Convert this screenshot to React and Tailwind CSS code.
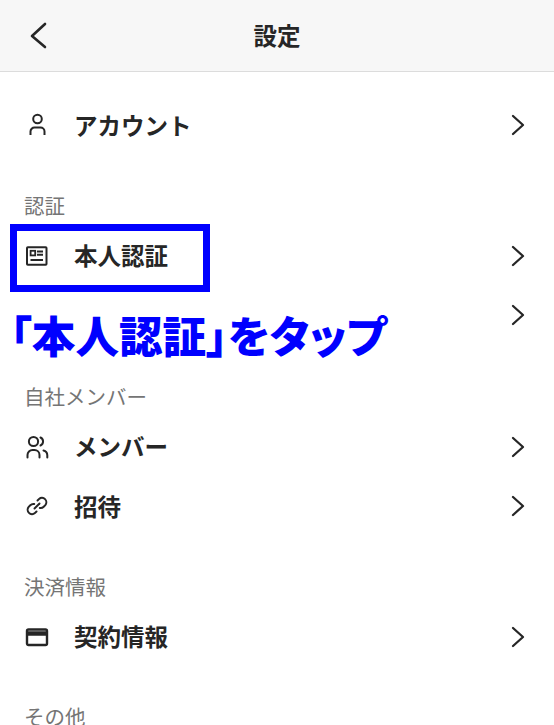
const Chevron = () => (
  <svg width="24" height="24" viewBox="0 0 24 24" fill="none" stroke="#262626" strokeWidth="2.3" strokeLinecap="round" strokeLinejoin="round">
    <path d="M8 3 18 12 8 21" />
  </svg>
);

const icons = {
  person: (
    <svg width="24" height="24" viewBox="0 0 24 24" fill="none" stroke="#262626" strokeWidth="2">
      <circle cx="12.5" cy="6" r="4.3" />
      <path d="M5.5 22V18.5a4 4 0 0 1 4-4h6a4 4 0 0 1 4 4V22" />
    </svg>
  ),
  id: (
    <svg width="24" height="24" viewBox="0 0 24 24" fill="none" stroke="#262626" strokeWidth="2">
      <rect x="2" y="3.2" width="19.5" height="17.6" rx="0.8" />
      <rect x="5.6" y="6.8" width="4.6" height="4.6" strokeWidth="1.8" />
      <path d="M12 7.4h6M12 10.8h6M5.5 16h12.5" />
    </svg>
  ),
  people: (
    <svg width="24" height="24" viewBox="0 0 24 24" fill="none" stroke="#262626" strokeWidth="2" strokeLinecap="round">
      <circle cx="8.5" cy="6.5" r="4.6" />
      <path d="M2.5 22.5v-2.5a5 5 0 0 1 5-5h2a5 5 0 0 1 5 5v2.5" />
      <path d="M15.5 2.5a4.4 4.4 0 0 1 0 8M18.5 15.5a5 5 0 0 1 3.8 4.7v2.3" />
    </svg>
  ),
  link: (
    <svg width="24" height="24" viewBox="0 0 24 24" fill="none" stroke="#262626" strokeWidth="2" strokeLinecap="round">
      <path d="M9.5 14.5 14.5 9.5" />
      <path d="M12.5 6.5l1.6-1.6a4.4 4.4 0 0 1 6.2 6.2l-1.6 1.6a4.4 4.4 0 0 1-3.9 1.2" />
      <path d="M11.5 17.5l-1.6 1.6a4.4 4.4 0 0 1-6.2-6.2l1.6-1.6a4.4 4.4 0 0 1 3.9-1.2" />
    </svg>
  ),
  card: (
    <svg width="24" height="24" viewBox="0 0 24 24" fill="none" stroke="#262626" strokeWidth="2.4">
      <rect x="2" y="4.5" width="20" height="15.5" rx="1.5" />
      <path d="M2 8.5h20" strokeWidth="4.5" />
    </svg>
  ),
};

function Row({ icon, label }) {
  return (
    <div className="h-[59.5px] flex items-center pl-[25px] pr-[25px]">
      <div className="w-[24px] h-[24px] shrink-0">{icon && icons[icon]}</div>
      <div className="ml-[25px] flex-1 text-[23.5px] font-bold text-[#262626]">{label}</div>
      <Chevron />
    </div>
  );
}

function Label({ children, className }) {
  return (
    <div className={`h-5 mb-[11px] pl-[24px] flex items-center text-[20.5px] text-[#757575] ${className}`}>{children}</div>
  );
}

export default function App() {
  return (
    <div className="relative w-[554px] h-[725px] overflow-hidden bg-white font-['Noto_Sans_CJK_JP',sans-serif]">
      <header className="h-[72px] bg-[#f7f7f7] border-b border-[#dcdcdc] flex items-center justify-center relative">
        <div className="absolute left-[26px] top-[20px]">
          <svg width="26" height="30" viewBox="0 0 26 30" fill="none" stroke="#262626" strokeWidth="2.6" strokeLinecap="round" strokeLinejoin="round">
            <path d="M19 4 6 16l13 11" />
          </svg>
        </div>
        <h1 className="text-[23.5px] font-bold text-[#262626]">設定</h1>
      </header>
      <div className="pt-[23.5px]">
        <Row icon="person" label="アカウント" />
        <Label className="mt-[40px]">認証</Label>
        <Row icon="id" label="本人認証" />
        <Row />
        <Label className="mt-[41px]">自社メンバー</Label>
        <Row icon="people" label="メンバー" />
        <Row icon="link" label="招待" />
        <Label className="mt-[40px]">決済情報</Label>
        <Row icon="card" label="契約情報" />
        <Label className="mt-[40px]">その他</Label>
      </div>
      <div className="absolute left-[10px] top-[224px] w-[200px] h-[68px] border-[7px] border-[#0000ff]" />
      <div className="absolute left-[10px] top-[304px] text-[43.6px] leading-[60px] font-black text-[#0000ff] whitespace-nowrap [font-feature-settings:'palt']">「本人認証」をタップ</div>
    </div>
  );
}
